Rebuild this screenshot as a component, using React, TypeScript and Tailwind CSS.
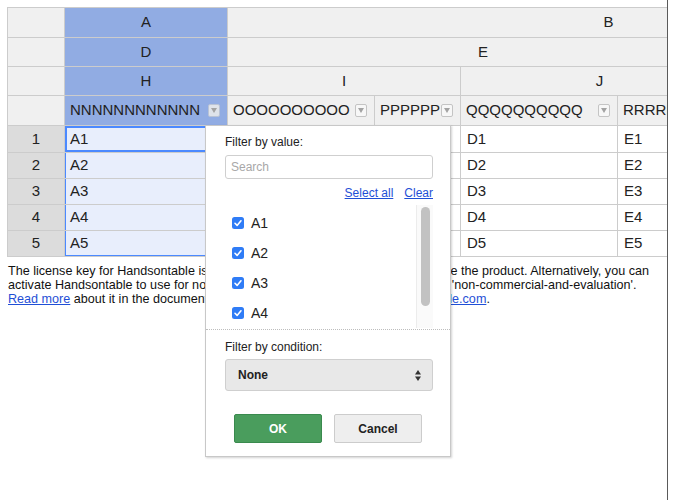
import React from "react";

const FONT = { fontFamily: '"Liberation Sans", Arial, sans-serif' };

function HeadBtn({ blue }: { blue?: boolean }) {
  return (
    <span
      className={
        "flex h-[13px] w-[12px] shrink-0 items-center justify-center rounded-[2px] border " +
        (blue ? "border-[#b9c3d6] bg-[#dfe3ea]" : "border-[#c4c4c4] bg-[#f7f7f7]")
      }
    >
      <svg width="6" height="5" viewBox="0 0 6 5">
        <path d="M0 0 L6 0 L3 5 Z" fill="#a3a3a3" />
      </svg>
    </span>
  );
}

function Check() {
  return (
    <svg width="12" height="12" viewBox="0 0 12 12" className="shrink-0">
      <rect x="0" y="0" width="12" height="12" rx="2.5" fill="#2f7cf6" />
      <path d="M3 6.3 L5.1 8.4 L9 3.8" fill="none" stroke="#fff" strokeWidth="1.6" strokeLinecap="round" strokeLinejoin="round" />
    </svg>
  );
}

const cell = "border-r border-b border-[#cccccc] overflow-hidden whitespace-nowrap";
const hdr = cell + " bg-[#f0f0f0] flex items-center justify-center";
const hdrBlue = cell + " bg-[#91ace3] flex items-center justify-center";

export default function App() {
  const subCols = ["OOOOOOOOOO", "PPPPPP", "QQQQQQQQQQ", "RRRRRRRRRR", "SSSSSS", "TTTTTT"];
  const rows = [1, 2, 3, 4, 5];
  const letters = ["B", "C", "D", "E", "F", "G"];
  return (
    <div className="relative flex h-[500px] w-[673px] overflow-hidden bg-white text-[#222]" style={FONT}>
      <div className="w-[667px] shrink-0 overflow-hidden pl-[7px] pt-[7px]">
        <div
          className="grid w-max grid-cols-[57px_163px_147px_86px_157px_121px_125px_126px] grid-rows-[30px_29px_29px_30px_27px_26px_26px_26px_26px] border-l border-t border-[#cccccc] text-[15px]"
        >
          {/* row 1 */}
          <div className={hdr}></div>
          <div className={hdrBlue}>A</div>
          <div className={hdr + " col-span-6"}>B</div>
          {/* row 2 */}
          <div className={hdr}></div>
          <div className={hdrBlue}>D</div>
          <div className={hdr + " col-span-4"}>E</div>
          <div className={hdr + " col-span-2"}>F</div>
          {/* row 3 */}
          <div className={hdr}></div>
          <div className={hdrBlue}>H</div>
          <div className={hdr + " col-span-2"}>I</div>
          <div className={hdr + " col-span-2"}>J</div>
          <div className={hdr + " col-span-2"}>K</div>
          {/* row 4 */}
          <div className={hdr}></div>
          <div className={cell + " flex items-center justify-between bg-[#91ace3] pl-[5px] pr-[7px]"}>
            <span>NNNNNNNNNNNN</span>
            <HeadBtn blue />
          </div>
          {subCols.map((s) => (
            <div key={s} className={cell + " flex items-center justify-between bg-[#f0f0f0] pl-[5px] pr-[7px]"}>
              <span className="overflow-hidden">{s}</span>
              <HeadBtn />
            </div>
          ))}
          {/* body */}
          {rows.map((r) => (
            <React.Fragment key={r}>
              <div className={cell + " flex items-center justify-center bg-[#dcdcdc]"}>{r}</div>
              <div
                className={
                  cell +
                  " flex items-center bg-[#e8eefc] pl-[5px] " +
                  (r === 1
                    ? "shadow-[inset_0_0_0_2px_#4b89ff]"
                    : r === 5
                    ? "shadow-[inset_1px_0_0_#4b89ff,inset_-1px_0_0_#4b89ff,inset_0_-1px_0_#4b89ff]"
                    : "shadow-[inset_1px_0_0_#4b89ff,inset_-1px_0_0_#4b89ff]")
                }
              >
                A{r}
              </div>
              {letters.map((l) => (
                <div key={l} className={cell + " flex items-center bg-white pl-[6px]"}>
                  {l}
                  {r}
                </div>
              ))}
            </React.Fragment>
          ))}
        </div>
        <p className="mt-[7px] whitespace-nowrap pl-px text-[12.6px] leading-[14px] text-[#111]">
          The license key for Handsontable is missing. Use your purchased key to activate the product. Alternatively, you can
          <br />
          activate Handsontable to use for non-commercial purposes by passing the key: 'non-commercial-and-evaluation'.
          <br />
          <a className="text-[#1f4fd6] underline">Read more</a> about it in the documentation or contact us at{" "}
          <a className="text-[#1f4fd6] underline">support@handsontable.com</a>.
        </p>
      </div>
      <div className="w-px shrink-0 bg-[#5a5a5a]"></div>
      <div className="flex-1 bg-white"></div>

      {/* Filter dropdown */}
      <div className="absolute left-[205px] top-[125px] flex h-[332px] w-[246px] flex-col border border-[#c8c8c8] bg-white text-[12px] text-[#222] shadow-[1px_1px_2px_rgba(0,0,0,0.18)]">
        <div className="flex flex-col pl-[19px] pr-[17px] pt-[9px]">
          <div className="leading-[14px]">Filter by value:</div>
          <div className="mt-[6px] flex h-[24px] items-center rounded-[3px] border border-[#cfcfcf] pl-[5px] text-[#a8a8a8]">
            Search
          </div>
          <div className="mt-[7px] flex justify-end gap-[11px] leading-[14px] text-[#1f4fd6]">
            <span className="underline">Select all</span>
            <span className="underline">Clear</span>
          </div>
          <div className="mt-[5px] flex h-[123px] overflow-hidden">
            <div className="flex flex-1 flex-col pl-[7px] pt-[3px] text-[14px]">
              {[1, 2, 3, 4, 5].map((i) => (
                <div key={i} className="flex h-[30px] shrink-0 items-center gap-[7px]">
                  <Check />
                  <span>A{i}</span>
                </div>
              ))}
            </div>
            <div className="flex w-[17px] justify-center border-l border-[#ececec] bg-[#fafafa] pt-[2px]">
              <div className="h-[99px] w-[9px] rounded-full bg-[#c2c2c2]"></div>
            </div>
          </div>
        </div>
        <div className="mt-px border-t border-dotted border-[#bdbdbd]"></div>
        <div className="flex flex-col pl-[19px] pr-[17px] pt-[10px]">
          <div className="leading-[14px]">Filter by condition:</div>
          <div className="mt-[5px] flex h-[32px] items-center justify-between rounded-[3px] border border-[#cfcfcf] bg-[#e8e8e8] pl-[12px] pr-[11px]">
            <span className="font-bold">None</span>
            <svg width="6" height="11" viewBox="0 0 6 11">
              <path d="M0 4.5 L3 0 L6 4.5 Z" fill="#333" />
              <path d="M0 6.5 L6 6.5 L3 11 Z" fill="#333" />
            </svg>
          </div>
          <div className="mt-[23px] flex gap-[12px] pl-[9px]">
            <div className="flex h-[29px] w-[88px] items-center justify-center rounded-[2px] border border-[#3a8a4e] bg-[#4a9d5d] font-bold text-white">
              OK
            </div>
            <div className="flex h-[29px] w-[88px] items-center justify-center rounded-[2px] border border-[#cccccc] bg-[#eeeeee] font-bold text-[#222]">
              Cancel
            </div>
          </div>
        </div>
      </div>
    </div>
  );
}
